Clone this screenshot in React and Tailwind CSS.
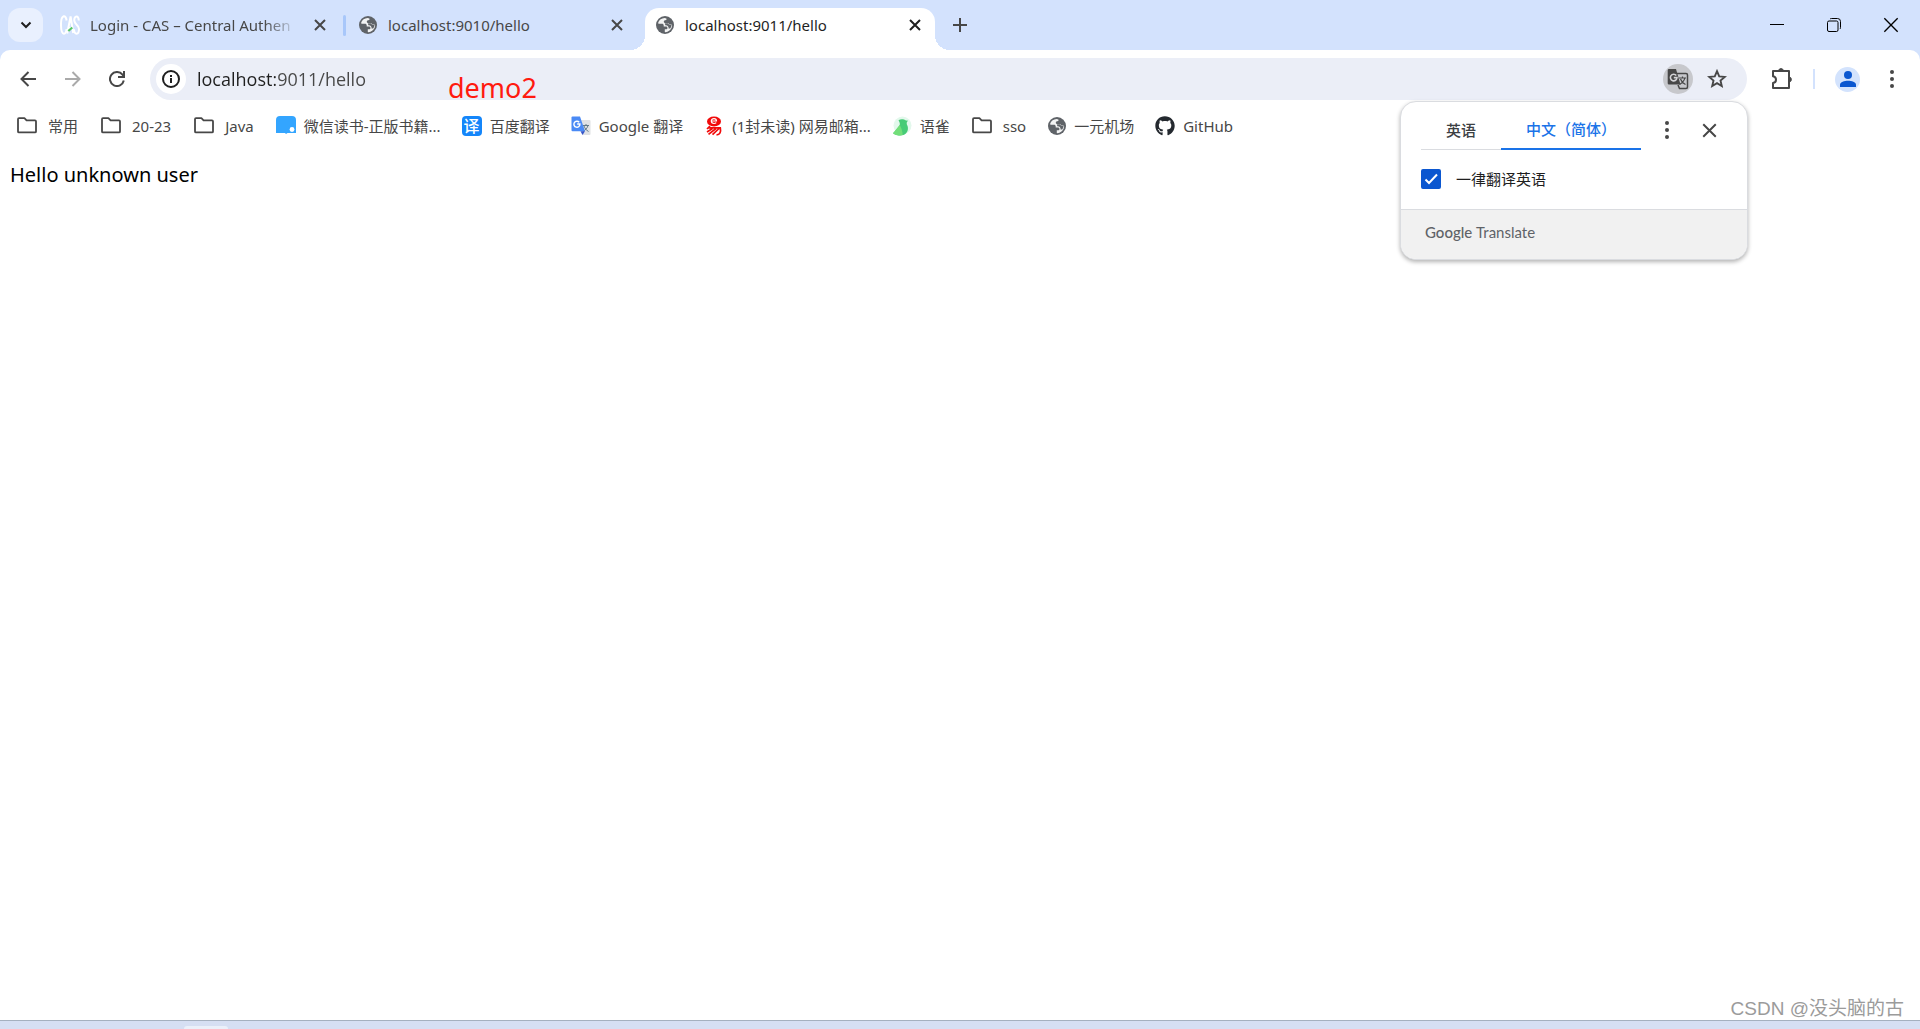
import { FaGithub } from "react-icons/fa";
import { useState } from "react";

function Globe() {
  return (
    <svg viewBox="0 0 18 18" className="size-[18px] shrink-0" aria-hidden="true">
      <circle cx="9" cy="9" r="9" fill="#5f6368" />
      <path
        d="M8.6 1.9c-3 .1-5.5 2-6.4 4.6l.2 1.2 3.6 0c1 0 1.7.6 1.7 1.5v1.2h2.2c.9 0 1.6.6 1.6 1.5 0 .8-.6 1.3-1.5 1.3H8.800v2.900l.8.1c2.6-.2 4.900-1.800 5.900-4.100l.6-2c0-.5 0-.9-.1-1.300l-1.700-.2c-.9 0-1.300-.3-1.600-.900l-.4-.6H9.500c-1 0-1.700-.600-1.700-1.400 0-.8.500-1.400 1.200-1.500l1.400-.2V2.400z"
        fill="#fff"
        fillOpacity="0.92"
      />
      <path d="M9.600 7.200h2.400l.5.700c.3.600.900 1 1.800 1h1.300c-.1 1.300-.6 2.500-1.400 3.500l-1.600.1c.2-1.900-.900-3.200-2.800-3.200H9.300c0-.8-.2-1.400-.6-1.800z" fill="#5f6368" />
    </svg>
  );
}

function Folder() {
  return (
    <svg viewBox="0 0 20 20" className="size-5 shrink-0" fill="none" stroke="#474747" strokeWidth="1.8" strokeLinejoin="round" aria-hidden="true">
      <path d="M1 3.200q0-1 1-1h5.400l2.200 2.200H18q1 0 1 1v10q0 1-1 1H2q-1 0-1-1z" />
    </svg>
  );
}

function CasLogo() {
  return (
    <svg viewBox="0 0 20 20" className="size-5 shrink-0" fill="none" stroke="#fff" strokeWidth="2" aria-hidden="true">
      <path d="M6.600 5.500C6.200 2.500 5 1 3.700 1.300 1.500 2 .9 6 1 10.500s1 8 2.900 8.200c1.500.1 2.400-2 2.700-4.500" />
      <path d="M7.200 18.500 10.600 1.500 13.200 18M8.300 13h4" />
      <path d="M18.800 5.500c-.2-2.800-1-4-2.300-4-1.500 0-2.400 2-2.200 4.200.3 4 4.600 4 4.700 8.300 0 2.800-1 4.700-2.400 4.700-1.500 0-2.400-1.700-2.600-4.500" />
      <path d="M8.300 16l4-3.500" stroke="#57c568" strokeWidth="2.200" />
    </svg>
  );
}

function WeRead() {
  return (
    <svg viewBox="0 0 20 20" className="size-5 shrink-0" aria-hidden="true">
      <path d="M4 0h12q4 0 4 4v13h-8.500l-1.500 1-1-1H0V4q0-4 4-4z" fill="#33a5ff" />
      <circle cx="16" cy="13.500" r="2.400" fill="#fff" />
    </svg>
  );
}

function BaiduFanyi() {
  return (
    <span className="flex size-5 shrink-0 items-center justify-center rounded bg-[#1486fa] text-base leading-5 font-medium text-white" aria-hidden="true">
      译
    </span>
  );
}

function GoogleTranslateColor() {
  return (
    <svg viewBox="0 0 20 20" className="size-5 shrink-0" aria-hidden="true">
      <path d="M8 4h10.500q1 0 1 1v13q0 1-1 1H12z" fill="#dfe1e4" />
      <path d="M12 9.500h6M15 8v1.500M17 9.500c-.6 2.500-2.500 4.500-5 6M13 10c.8 2.500 2.300 4 4.500 5.500" stroke="#607988" fill="none" />
      <path d="M1.500.5H9l5 14.800H1.500q-1 0-1-1V1.500q0-1 1-1z" fill="#4a8af5" />
      <path d="M9.500 15.300H14L11.500 19z" fill="#3554c8" />
      <path d="M8.200 6.300A3 3 0 1 0 8.900 8H6.200" stroke="#fff" strokeWidth="1.400" fill="none" />
    </svg>
  );
}

function NetEase() {
  return (
    <svg viewBox="0 0 16 20" className="size-5 shrink-0" fill="none" aria-hidden="true">
      <ellipse cx="8" cy="5.500" rx="7" ry="5" fill="#f10b0b" />
      <path d="M5.500 5h5c0-1.600-1-2.400-2.500-2.400-1.600 0-2.700 1-2.700 2.500s1.100 2.400 2.700 2.400c1 0 1.700-.3 2.200-.8" stroke="#fff" strokeWidth="1.200" />
      <path d="M4 10 1 13M2 11.800h12.300c.8 4-.3 7-3.800 7M6.500 12.500 1 16M10 12.500 2.500 18.300M13 12.500 6.500 18.700" stroke="#f10b0b" strokeWidth="1.700" />
    </svg>
  );
}

function Yuque() {
  return (
    <svg viewBox="0 0 20 20" className="size-5 shrink-0" aria-hidden="true">
      <circle cx="10.500" cy="9.500" r="9" fill="#e3f8ec" />
      <path d="M6.500 4.200c2.500-1.500 5.500-.8 7.500.2l2.200.4c-1.500 1-1.600 2-1.400 3.500.5 1.200 1.400 2.600 1.100 5-.4 3.500-3.300 6.200-7.200 6.200-3 0-5.600-.8-7.700-2.300 2-2.200 5.300-5.700 6.700-8.300C8.200 7.500 7.500 5.800 6.500 4.200z" fill="#47cb76" />
      <path d="M7.700 9c1.500 2.500 2.800 6 3 10-3.700 1-7.500.2-9.700-1.800z" fill="#72de79" />
    </svg>
  );
}

function CloseIcon({ className }) {
  return (
    <svg viewBox="0 0 12 12" className={className} fill="none" stroke="currentColor" aria-hidden="true">
      <path d="M1 1l10 10M11 1 1 11" />
    </svg>
  );
}

function Dots() {
  return (
    <svg viewBox="0 0 4 18" className="h-[18px] w-1" fill="#474747" aria-hidden="true">
      <circle cx="2" cy="2" r="2" />
      <circle cx="2" cy="9" r="2" />
      <circle cx="2" cy="16" r="2" />
    </svg>
  );
}

function PageTranslateIcon() {
  return (
    <svg viewBox="0 0 22 22" className="size-[22px]" fill="none" aria-hidden="true">
      <path d="M9 5.500h10q1.500 0 1.500 1.500v12q0 1.500-1.500 1.500h-6.500L11 17" stroke="#474747" strokeWidth="1.500" />
      <path d="M12 10h7M15.500 8.500V10M17.800 10c-.6 3-2.800 5-5.300 6.500M13.500 11c.8 2.500 2.500 4.200 5 5.500" stroke="#474747" strokeWidth="1.200" />
      <path d="M2 1h7l4.500 15.500H2q-1.300 0-1.300-1.300V2.300Q.7 1 2 1z" fill="#474747" />
      <path d="M9.300 7.500A3.300 3.300 0 1 0 10 9.600H6.800" stroke="#d3d3d6" strokeWidth="1.600" />
    </svg>
  );
}

const bookmarks = [
  { label: "常用", icon: <Folder />, gap: "gap-[11px] px-px" },
  { label: "20-23", icon: <Folder />, gap: "gap-[11px] px-px" },
  { label: "Java", icon: <Folder />, gap: "gap-[11px] px-px" },
  { label: "微信读书-正版书籍...", icon: <WeRead />, gap: "gap-2" },
  { label: "百度翻译", icon: <BaiduFanyi />, gap: "gap-2" },
  { label: "Google 翻译", icon: <GoogleTranslateColor />, gap: "gap-2" },
  { label: "(1封未读) 网易邮箱...", icon: <NetEase />, gap: "gap-2" },
  { label: "语雀", icon: <Yuque />, gap: "gap-2" },
  { label: "sso", icon: <Folder />, gap: "gap-[11px] px-px" },
  { label: "一元机场", icon: <Globe />, gap: "gap-2" },
  { label: "GitHub", icon: <FaGithub className="size-5 shrink-0 text-[#24292f]" />, gap: "gap-2" },
];

function TabStrip() {
  return (
    <header className="flex h-[50px] items-center bg-[#d3e2fd] pl-2">
      <button aria-label="Search tabs" className="flex h-[34px] w-[35px] shrink-0 items-center justify-center rounded-xl bg-[#e9f0fe] text-[#1f1f1f]">
        <svg viewBox="0 0 12 8" className="h-2 w-3" fill="none" stroke="currentColor" strokeWidth="2" aria-hidden="true">
          <path d="M1.500 1.500 6 6l4.500-4.500" />
        </svg>
      </button>

      <div className="flex h-full w-[300px] shrink-0 items-center gap-2.5 pl-[17px] text-[#474747]">
        <CasLogo />
        <a href="#login" className="flex-1 whitespace-nowrap [mask-image:linear-gradient(to_right,#000_82%,transparent_98%)]">
          Login - CAS – Central Authen
        </a>
        <button aria-label="Close tab" className="mr-[15px] flex size-4 items-center justify-center">
          <CloseIcon className="size-3 stroke-2" />
        </button>
      </div>
      <div className="h-[21px] w-[3px] shrink-0 rounded-full bg-[#a8c7fa]" />
      <div className="flex h-full w-[299px] shrink-0 items-center gap-[11px] pl-[13px] text-[#474747]">
        <Globe />
        <a href="#hello-9010" className="flex-1 whitespace-nowrap">localhost:9010/hello</a>
        <button aria-label="Close tab" className="mr-5 flex size-4 items-center justify-center">
          <CloseIcon className="size-3 stroke-2" />
        </button>
      </div>

      <div className="relative mt-2 flex h-[42px] w-[290px] shrink-0 items-center gap-[11px] rounded-t-[14px] bg-white pb-2 pl-[11px] text-[#1f1f1f]">
        <span className="absolute bottom-0 -left-[15px] size-[15px] bg-[radial-gradient(circle_at_top_left,transparent_15px,#fff_15px)]" />
        <span className="absolute -right-[15px] bottom-0 size-[15px] bg-[radial-gradient(circle_at_top_right,transparent_15px,#fff_15px)]" />
        <Globe />
        <a href="#hello-9011" className="flex-1 whitespace-nowrap">localhost:9011/hello</a>
        <button aria-label="Close tab" className="mr-3 flex size-4 items-center justify-center">
          <CloseIcon className="size-3 stroke-2" />
        </button>
      </div>
      <button aria-label="New tab" className="ml-[17px] flex size-4 shrink-0 items-center justify-center text-[#474747]">
        <svg viewBox="0 0 14 14" className="size-3.5" stroke="currentColor" strokeWidth="2" aria-hidden="true">
          <path d="M7 0v14M0 7h14" />
        </svg>
      </button>

      <div className="mr-[22px] ml-auto flex items-center gap-[43px] text-black">
        <button aria-label="Minimize" className="flex h-4 w-3.5 items-center justify-center">
          <svg viewBox="0 0 14 14" className="size-3.5" stroke="currentColor" aria-hidden="true"><path d="M0 6.500h14" /></svg>
        </button>
        <button aria-label="Restore" className="flex h-4 w-3.5 items-center justify-center">
          <svg viewBox="0 0 14 14" className="size-3.5" fill="none" stroke="currentColor" aria-hidden="true">
            <rect x="0.500" y="3" width="10.500" height="10.500" rx="1.500" />
            <path d="M3 1q.5-.5 1.500-.5h6q3 0 3 3v6q0 1-.5 1.500" />
          </svg>
        </button>
        <button aria-label="Close window" className="flex h-4 w-3.5 items-center justify-center">
          <CloseIcon className="size-4 shrink-0 stroke-1" />
        </button>
      </div>
    </header>
  );
}

function TranslatePopup() {
  const [always, setAlways] = useState(true);
  return (
    <section aria-label="Google Translate" className="absolute top-[101px] right-[172px] w-[348px] overflow-hidden rounded-2xl border border-[#dadce0] bg-white shadow-[0_2px_4px_rgba(0,0,0,0.3)]">
      <div className="flex items-center pt-2 pl-5 font-medium">
        <button className="h-10 w-20 border-b border-[#dadce0] text-[#3c4043]">英语</button>
        <button className="h-10 w-[140px] border-b-2 border-[#1a73e8] text-[#1a73e8]">中文（简体）</button>
        <button aria-label="Options" className="ml-6"><Dots /></button>
        <button aria-label="Close" className="ml-[33px] text-[#474747]"><CloseIcon className="size-[15px] stroke-[1.6]" /></button>
      </div>
      <label className="flex items-center gap-[15px] px-5 pt-[19px] pb-5 text-[#1f1f1f]">
        <span className="relative flex size-5">
          <input type="checkbox" checked={always} onChange={(e) => setAlways(e.target.checked)} className="peer size-5 appearance-none rounded-xs border-2 border-[#0b57d0] checked:bg-[#0b57d0]" />
          <svg viewBox="0 0 20 20" className="pointer-events-none absolute inset-0 hidden size-5 peer-checked:block" fill="none" stroke="#fff" strokeWidth="2" aria-hidden="true">
            <path d="M4.500 10.500 8 14l8-8.500" />
          </svg>
        </span>
        <span className="leading-5">一律翻译英语</span>
      </label>
      <footer className="flex h-[50px] items-center border-t border-[#dadce0] bg-[#f1f1f1] pb-1.5 pl-6 font-['Lato','Open_Sans',sans-serif] text-[15px] text-[#5f6368]">
        <span className="font-medium">Google</span>&nbsp;<span>Translate</span>
      </footer>
    </section>
  );
}

function Toolbar() {
  return (
    <div className="flex h-[58px] items-center rounded-t-[10px] bg-white text-[#474747]">
      <button aria-label="Back" className="ml-5 flex size-4 shrink-0 items-center justify-center">
        <svg viewBox="0 0 16 16" className="size-4" fill="none" stroke="currentColor" strokeWidth="2" aria-hidden="true"><path d="M16 8H2M8.500 1 1.500 8l7 7" /></svg>
      </button>
      <button aria-label="Forward" disabled className="ml-[29px] flex size-4 shrink-0 items-center justify-center text-[#aaaaaa]">
        <svg viewBox="0 0 16 16" className="size-4" fill="none" stroke="currentColor" strokeWidth="2" aria-hidden="true"><path d="M0 8h14M7.500 1l7 7-7 7" /></svg>
      </button>
      <button aria-label="Reload" className="ml-7 flex size-4 shrink-0 items-center justify-center">
        <svg viewBox="0 0 16 16" className="size-4 shrink-0" fill="none" stroke="currentColor" strokeWidth="2" aria-hidden="true">
          <path d="M14.800 9.500A7 7 0 1 1 13.500 3.700L15 5.500M15 0v6H9" />
        </svg>
      </button>
      <div className="ml-[25px] flex h-[42px] flex-1 items-center rounded-full bg-[#ebeef7] pr-5 pl-1.5">
        <button aria-label="View site information" className="flex size-[30px] shrink-0 items-center justify-center rounded-full bg-white text-[#1f1f1f]">
          <svg viewBox="0 0 18 18" className="size-[18px]" fill="none" stroke="currentColor" strokeWidth="2" aria-hidden="true">
            <circle cx="9" cy="9" r="8" />
            <path d="M9 8v5M9 5v2" />
          </svg>
        </button>
        <input aria-label="Address" defaultValue="localhost:9011/hello" className="ml-[11px] h-8 min-w-0 flex-1 bg-[linear-gradient(to_right,#1f1f1f_78px,#474747_78px)] bg-clip-text font-['Open_Sans',sans-serif] text-lg text-transparent outline-none" />
        <button aria-label="Translate this page" className="flex size-[30px] items-center justify-center rounded-full bg-[#c7c8cc]">
          <PageTranslateIcon />
        </button>
        <button aria-label="Bookmark this tab" className="ml-[14px]">
          <svg viewBox="0 0 20 20" className="size-5" fill="none" stroke="currentColor" strokeWidth="1.900" aria-hidden="true">
            <path d="M10 2.200l2.200 5.200 5.600.5-4.300 3.700 1.300 5.500L10 14.200l-4.800 2.900 1.300-5.500L2.200 7.900l5.600-.5z" />
          </svg>
        </button>
      </div>
      <button aria-label="Extensions" className="ml-6 shrink-0">
        <svg viewBox="0 0 22 22" className="size-[22px]" fill="none" stroke="currentColor" strokeWidth="2" strokeLinejoin="round" aria-hidden="true">
          <path d="M2 3h16v17H2v-5c2-.3 3-1.500 3-3.300S4 8.700 2 8.300z" />
          <path d="M7.500 2.500a2.600 2.600 0 0 1 5 0zM18.500 9a2.600 2.600 0 0 1 0 5z" fill="currentColor" strokeWidth="1" />
        </svg>
      </button>
      <div className="ml-5 h-5 w-0.5 shrink-0 bg-[#d3e2fd]" />
      <button aria-label="Profile" className="ml-5 flex size-[25px] shrink-0 items-center justify-center rounded-full bg-[#d3e3fd]">
        <svg viewBox="0 0 16 16" className="size-4" fill="#0b57d0" aria-hidden="true">
          <circle cx="8" cy="4" r="4" />
          <path d="M0 16v-2.200c0-2.800 4.500-4 8-4s8 1.200 8 4V16z" />
        </svg>
      </button>
      <button aria-label="Menu" className="mr-[26px] ml-[30px] shrink-0"><Dots /></button>
    </div>
  );
}

export default function App() {
  return (
    <div className="relative flex min-h-screen flex-col overflow-hidden bg-white font-['Noto_Sans','Noto_Sans_CJK_SC',sans-serif] text-[15px] leading-5">
      <TabStrip />
      <div className="bg-[#d3e2fd]"><Toolbar /></div>
      <nav aria-label="Bookmarks" className="flex h-9 items-center gap-[21px] pl-4 whitespace-nowrap text-[#474747]">
        {bookmarks.map((b) => (
          <a key={b.label} href="#bookmark" className={`flex shrink-0 items-center ${b.gap}`}>
            {b.icon}
            <span>{b.label}</span>
          </a>
        ))}
      </nav>
      <main className="flex-1 px-[10px] pt-4">
        <p className="text-xl leading-[30px] text-black">Hello unknown user</p>
      </main>
      <footer className="flex h-[9px] items-end border-t border-[#a5b0bf] bg-[#d6dff3] pl-[184px]">
        <div className="h-[3px] w-11 rounded-t-sm bg-[#ebf0fa]" />
      </footer>
      <span className="absolute top-[72px] left-[448px] text-[27px] leading-8 text-[#ff1a0f]">demo2</span>
      <span className="absolute right-4 bottom-1.5 font-['Liberation_Sans','Noto_Sans_CJK_SC',sans-serif] text-[19px] leading-7 whitespace-nowrap text-[#9b9b9b] [text-shadow:1px_1px_0_#fff]">CSDN @没头脑的古</span>
      <TranslatePopup />
    </div>
  );
}
